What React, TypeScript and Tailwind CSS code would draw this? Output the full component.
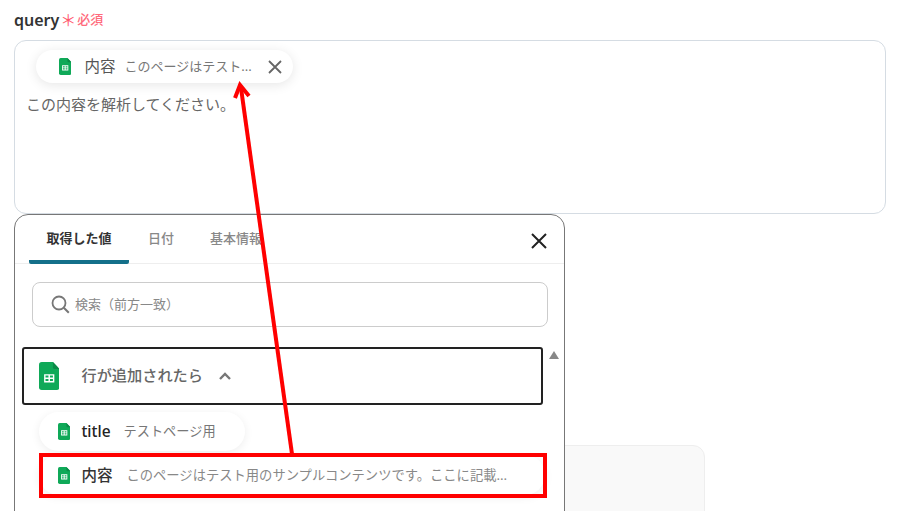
const font = { fontFamily: '"Noto Sans","Noto Sans CJK JP",sans-serif' };

function Sheet({ size }: { size: number }) {
  return (
    <svg width={size * 0.73} height={size} viewBox="0 0 22 30" className="shrink-0">
      <path d="M3 0h12l7 7.5V27a3 3 0 0 1-3 3H3a3 3 0 0 1-3-3V3a3 3 0 0 1 3-3z" fill="#0fa958" />
      <path d="M15 0l7 7.5h-5a2 2 0 0 1-2-2z" fill="#0b8a48" />
      <path d="M5.5 13h11v9h-11z M7 14.5v2.2h3.2v-2.2z M11.8 14.5v2.2H15v-2.2z M7 18.3v2.2h3.2v-2.2z M11.8 18.3v2.2H15v-2.2z" fill="#fff" fillRule="evenodd" />
    </svg>
  );
}

export default function App() {
  return (
    <div style={font} className="relative w-[898px] h-[511px] overflow-hidden bg-white">
      <div className="px-[14px] pt-[10px]">
        <div className="flex items-center h-[20px]">
          <span className="text-[16px] font-semibold text-[#333]">query</span>
          <span className="ml-[1px] text-[16px] leading-[20px] text-[#ff5a6e]">＊</span>
          <span className="ml-[1px] text-[13px] font-medium text-[#ff6b7c]">必須</span>
        </div>
        <div className="mt-[10px] w-[872px] h-[174px] rounded-[12px] border border-[#d5dce3] px-[11px] pt-[9px]">
          <div className="ml-[10px] w-[257px] h-[33px] rounded-full bg-white shadow-[0_2px_12px_rgba(0,0,0,0.1)] flex items-center pl-[23px]">
            <Sheet size={17} />
            <span className="ml-[13px] text-[15.5px] text-[#555]">内容</span>
            <span className="ml-[9px] text-[13px] text-[#777]">このページはテスト...</span>
            <svg width="14" height="14" viewBox="0 0 14 14" className="ml-[16px]">
              <path d="M1 1l12 12M13 1L1 13" stroke="#666" strokeWidth="1.8" />
            </svg>
          </div>
          <div className="mt-[10px] text-[15px] leading-[22px] text-[#666]">この内容を解析してください。</div>
        </div>
        <div className="mt-[231px] w-[691px] h-[80px] rounded-[12px] border border-[#eeeeee] bg-[#f9f9f9]" />
      </div>

      <div className="absolute left-[14px] top-[214px] w-[551px] h-[320px] rounded-[14px] border border-[#777] bg-white">
        <div className="relative h-[49px] border-b border-[#eeeeee] flex pl-[14px] text-[13px]">
          <div className="w-[100px] h-[49px] flex items-center justify-center font-bold text-[#333] border-b-[4px] border-[#14708a] rounded-b-[2px] pt-[2px]">取得した値</div>
          <div className="ml-[19px] h-[48px] flex items-center font-medium text-[#888]">日付</div>
          <div className="ml-[36px] h-[48px] flex items-center font-medium text-[#888]">基本情報</div>
          <svg width="18" height="18" viewBox="0 0 18 18" className="absolute left-[515px] top-[17px]">
            <path d="M2 2l14 14M16 2L2 16" stroke="#222" strokeWidth="2" />
          </svg>
        </div>
        <div className="ml-[17px] mt-[18px] w-[516px] h-[45px] rounded-[8px] border border-[#ccc] flex items-center pl-[18px] text-[13px] text-[#888]">
          <svg width="19" height="19" viewBox="0 0 19 19" className="shrink-0">
            <circle cx="8" cy="8" r="6.5" fill="none" stroke="#777" strokeWidth="1.8" />
            <path d="M12.8 12.8l5 5" stroke="#777" strokeWidth="2" />
          </svg>
          <span className="ml-[5px]">検索（前方一致）</span>
        </div>
        <div className="relative">
          <div className="ml-[7px] mt-[20px] w-[521px] h-[58px] rounded-[3px] border-2 border-[#222] flex items-center pl-[15px]">
            <Sheet size={28} />
            <span className="ml-[22px] mb-[2px] text-[15.2px] font-medium text-[#666]">行が追加されたら</span>
            <svg width="14" height="9" viewBox="0 0 14 9" className="ml-[15px]">
              <path d="M2 7l5-5 5 5" fill="none" stroke="#777" strokeWidth="2.4" />
            </svg>
          </div>
          <div className="absolute left-[534px] top-[4px] w-0 h-0 border-x-[5px] border-x-transparent border-b-[8px] border-b-[#888]" />
          <div className="ml-[24px] mt-[7px] w-[206px] h-[39px] rounded-full bg-white shadow-[0_2px_10px_rgba(0,0,0,0.07)] flex items-center pl-[19px]">
            <Sheet size={17} />
            <span className="ml-[11px] text-[15.5px] font-medium text-[#222]">title</span>
            <span className="ml-[13px] text-[13.2px] text-[#777]">テストページ用</span>
          </div>
          <div className="ml-[24px] mt-[4px] w-[506px] h-[40px] rounded-full bg-white shadow-[0_2px_10px_rgba(0,0,0,0.07)] flex items-center pl-[19px] pt-[1px]">
            <Sheet size={17} />
            <span className="ml-[11px] text-[15.5px] font-medium text-[#333]">内容</span>
            <span className="ml-[14px] text-[13.3px] text-[#888]">このページはテスト用のサンプルコンテンツです。ここに記載...</span>
          </div>
        </div>
      </div>

      <div className="absolute left-[39px] top-[453px] w-[508px] h-[45px] border-4 border-[#ff0000]" />
      <svg width="898" height="511" className="absolute left-0 top-0 pointer-events-none">
        <path d="M292 454L241 88" stroke="#ff0000" strokeWidth="4" fill="none" />
        <path d="M235 98L240 85L249 96" stroke="#ff0000" strokeWidth="4" fill="none" />
      </svg>
    </div>
  );
}
